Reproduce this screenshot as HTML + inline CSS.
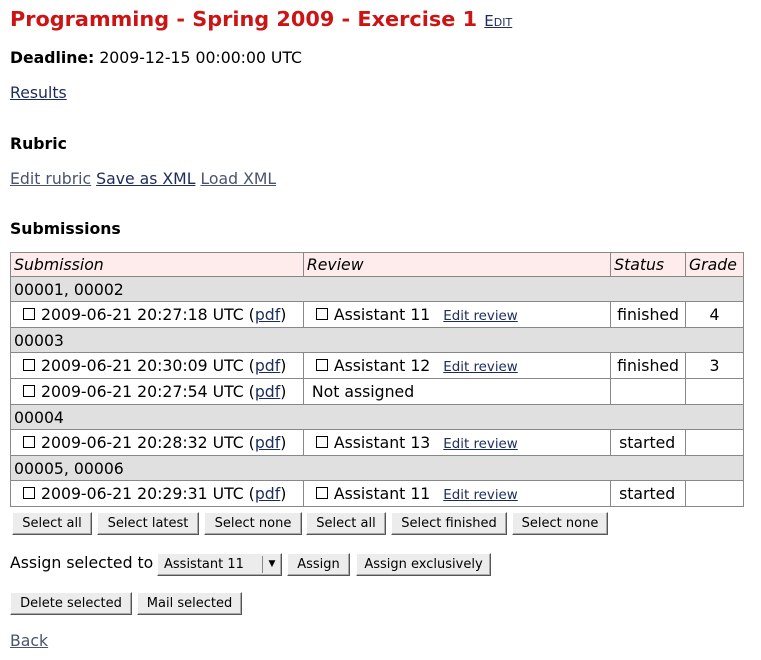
<!DOCTYPE html>
<html><head><style>
body{margin:0;width:761px;height:660px;background:#fff;font-family:"DejaVu Sans","Liberation Sans",sans-serif;font-size:15.7px;color:#000;position:relative;overflow:hidden}
.a{position:absolute;line-height:1;white-space:nowrap}
a{color:#1c2b5a;text-decoration:underline}
a.v{color:#4a5370}
h1{position:absolute;margin:0;left:10px;top:9px;font-size:20.8px;line-height:1;color:#cc1414;white-space:nowrap}
h1 a{font-size:15px;font-weight:normal;font-variant:small-caps;color:#1c2b5a}
table{position:absolute;left:10px;top:252px;border-collapse:collapse;width:734px}
td{border:1px solid #888;padding:0 0 0 3px;font-size:15.7px;white-space:nowrap;height:24px}
tr.h td{background:#fdeceb;font-style:italic;height:23px}
tr.g td{background:#e0e0e0;height:24px}
tr.s td{height:25px}
.cb{display:inline-block;width:10px;height:10px;border:1px solid #000;margin:0 6px 0 9px;vertical-align:0px}
.er{font-size:13.4px;margin-left:8px}
.b{position:absolute;height:21px;background:#ececec;border:1px solid;border-color:#fff #555 #555 #fff;box-shadow:inset -1px -1px 0 #aaa;font-size:13px;line-height:21px;text-align:center;box-sizing:content-box}
</style></head><body>
<h1>Programming - Spring 2009 - Exercise 1 <a href="#">Edit</a></h1>
<div class="a" style="left:10px;top:50px"><b>Deadline:</b> 2009-12-15 00:00:00 UTC</div>
<div class="a" style="left:10px;top:85px"><a href="#">Results</a></div>
<div class="a" style="left:10px;top:136px;font-weight:bold">Rubric</div>
<div class="a" style="left:10px;top:171px"><a class="v" href="#">Edit rubric</a> <a href="#">Save as XML</a> <a class="v" href="#">Load XML</a></div>
<div class="a" style="left:10px;top:221px;font-weight:bold">Submissions</div>
<table>
<colgroup><col style="width:293px"><col style="width:308px"><col style="width:75px"><col style="width:58px"></colgroup>
<tr class="h"><td>Submission</td><td>Review</td><td>Status</td><td>Grade</td></tr>
<tr class="g"><td colspan="4">00001, 00002</td></tr>
<tr class="s"><td><span class="cb"></span>2009-06-21 20:27:18 UTC (<a href="#">pdf</a>)</td><td><span class="cb"></span>Assistant 11 <a class="er" href="#">Edit review</a></td><td style="text-align:center;padding:0">finished</td><td style="text-align:center;padding:0">4</td></tr>
<tr class="g"><td colspan="4">00003</td></tr>
<tr class="s"><td><span class="cb"></span>2009-06-21 20:30:09 UTC (<a href="#">pdf</a>)</td><td><span class="cb"></span>Assistant 12 <a class="er" href="#">Edit review</a></td><td style="text-align:center;padding:0">finished</td><td style="text-align:center;padding:0">3</td></tr>
<tr class="s"><td><span class="cb"></span>2009-06-21 20:27:54 UTC (<a href="#">pdf</a>)</td><td style="padding-left:8px">Not assigned</td><td></td><td></td></tr>
<tr class="g"><td colspan="4">00004</td></tr>
<tr class="s"><td><span class="cb"></span>2009-06-21 20:28:32 UTC (<a href="#">pdf</a>)</td><td><span class="cb"></span>Assistant 13 <a class="er" href="#">Edit review</a></td><td style="padding-left:8px">started</td><td></td></tr>
<tr class="g"><td colspan="4">00005, 00006</td></tr>
<tr class="s"><td><span class="cb"></span>2009-06-21 20:29:31 UTC (<a href="#">pdf</a>)</td><td><span class="cb"></span>Assistant 11 <a class="er" href="#">Edit review</a></td><td style="padding-left:8px">started</td><td></td></tr>
</table>
<div class="b" style="left:12px;top:512px;width:78px">Select all</div>
<div class="b" style="left:97px;top:512px;width:100px">Select latest</div>
<div class="b" style="left:204px;top:512px;width:96px">Select none</div>
<div class="b" style="left:306px;top:512px;width:78px">Select all</div>
<div class="b" style="left:391px;top:512px;width:114px">Select finished</div>
<div class="b" style="left:512px;top:512px;width:94px">Select none</div>
<div class="a" style="left:10px;top:555px">Assign selected to</div>
<div class="b" style="left:157px;top:553px;width:123px;text-align:left"><span style="margin-left:6px">Assistant 11</span><span style="position:absolute;left:104px;top:2px;height:17px;border-left:1px solid #888;width:18px;text-align:center;font-size:9px;line-height:17px">▼</span></div>
<div class="b" style="left:287px;top:553px;width:61px">Assign</div>
<div class="b" style="left:356px;top:553px;width:133px">Assign exclusively</div>
<div class="b" style="left:10px;top:592px;width:120px">Delete selected</div>
<div class="b" style="left:137px;top:592px;width:103px">Mail selected</div>
<div class="a" style="left:10px;top:633px"><a class="v" href="#">Back</a></div>
</body></html>
